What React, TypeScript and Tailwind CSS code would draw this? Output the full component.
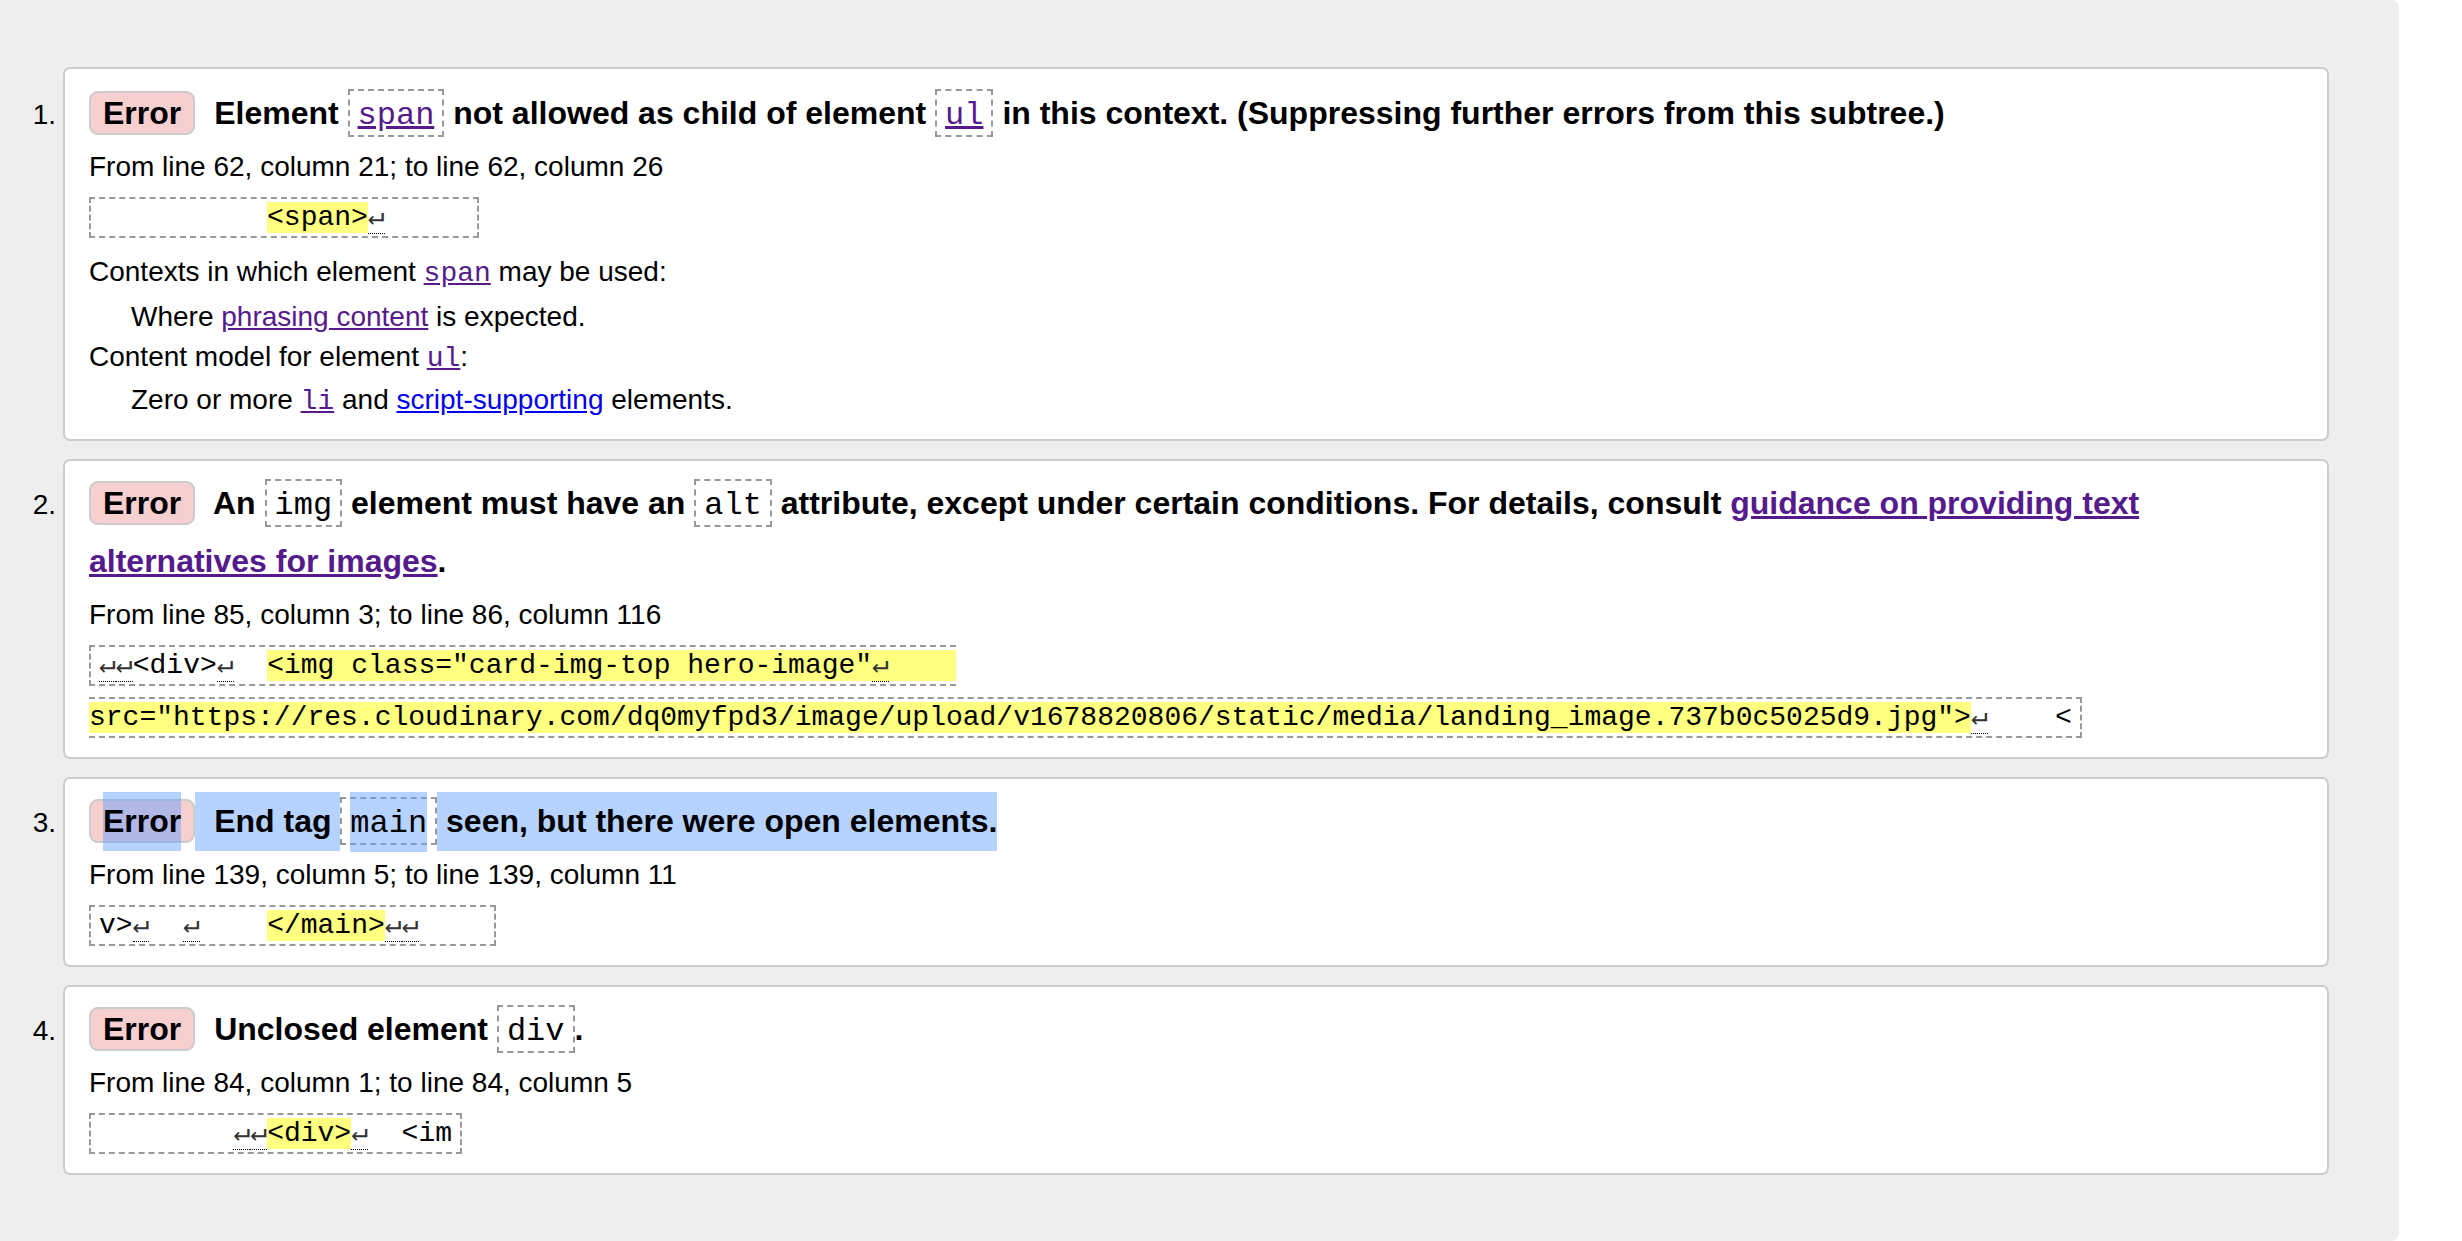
import React from "react";

// selection highlight (semi-transparent blue, tall as the title line)
const SEL = "bg-[#64a0ff78] pt-[11px] pb-[12px]";
const SEL_MONO = "bg-[#64a0ff78] pt-[13px] pb-[10px]";
const MONO = "font-['Liberation_Mono','DejaVu_Sans_Mono',monospace]";
const VISITED = "text-[#551a8b] underline";

function Badge({ selected }: { selected?: boolean }) {
  return (
    <span className="rounded-[9px] border-2 border-[#cccccc] bg-[#f6cfcf] px-[12px] py-[2px]">
      <span className={selected ? SEL : ""}>Error</span>
    </span>
  );
}

// dashed code box inside the bold title
function TCode({ children, link, selected }: { children: React.ReactNode; link?: boolean; selected?: boolean }) {
  return (
    <code
      className={`${MONO} border-2 border-dashed border-[#999999] px-[8px] pt-[6px] pb-[1px] text-[32px] font-normal leading-none`}
    >
      {link ? <a className={VISITED}>{children}</a> : selected ? <span className={SEL_MONO}>{children}</span> : children}
    </code>
  );
}

// inline code link in the body text
function CLink({ children }: { children: React.ReactNode }) {
  return <code className={`${MONO} text-[28px] leading-none ${VISITED}`}>{children}</code>;
}

function Lf() {
  return <span className="border-b border-dotted border-black text-[#333333]">↵</span>;
}

function Hl({ children }: { children: React.ReactNode }) {
  return <span className="bg-[#ffff80]">{children}</span>;
}

function Extract({ children }: { children: React.ReactNode }) {
  return (
    <p className={`${MONO} mt-[5px] text-[28px] leading-[52px]`}>
      <code className="whitespace-pre border-2 border-dashed border-[#999999] px-[8px] py-[3px]">{children}</code>
    </p>
  );
}

function Item({
  n,
  title,
  location,
  extract,
  children,
  first,
}: {
  n: number;
  title: React.ReactNode;
  location: string;
  extract: React.ReactNode;
  children?: React.ReactNode;
  first?: boolean;
}) {
  return (
    <li className="flex items-baseline">
      <div className="w-[56px] shrink-0 text-right text-[28px] leading-[40px]">{n}.</div>
      <div
        className={`ml-[7px] w-[2266px] rounded-[7px] border-2 border-[#cccccc] bg-white px-[24px] pb-[13px] ${first ? "pt-[15px]" : "pt-[13px]"}`}
      >
        <p className="text-[32px] font-bold leading-[58px]">{title}</p>
        <p className="mt-[5px] text-[28px] leading-[40px]">{location}</p>
        <Extract>{extract}</Extract>
        {children}
      </div>
    </li>
  );
}

export default function App() {
  return (
    <div className="min-h-screen bg-white font-['Liberation_Sans',Arial,sans-serif] text-black">
      <div className="h-[1241px] w-[2399px] rounded-r-[8px] bg-[#eeeeee] pt-[67px]">
        <ol className="flex flex-col gap-[18px]">
          <Item
            n={1}
            first
            title={
              <>
                <Badge />
                <span className="pl-[10px]"> Element </span>
                <TCode link>span</TCode>
                {" not allowed as child of element "}
                <TCode link>ul</TCode>
                {" in this context. (Suppressing further errors from this subtree.)"}
              </>
            }
            location="From line 62, column 21; to line 62, column 26"
            extract={
              <>
                {"          "}
                <Hl>{"<span>"}</Hl>
                <Lf />
                {"     "}
              </>
            }
          >
            <dl className="text-[28px]">
              <dt className="mt-[8px] leading-[40px]">
                Contexts in which element <CLink>span</CLink> may be used:
              </dt>
              <dd className="mt-[5px] ml-[42px] leading-[40px]">
                Where <a className={VISITED}>phrasing content</a> is expected.
              </dd>
              <dt className="leading-[40px]">
                Content model for element <CLink>ul</CLink>:
              </dt>
              <dd className="mt-[3px] mb-[6px] ml-[42px] leading-[40px]">
                Zero or more <CLink>li</CLink> and <a className="text-[#0000ee] underline">script-supporting</a> elements.
              </dd>
            </dl>
          </Item>

          <Item
            n={2}
            title={
              <>
                <Badge />
                <span className="pl-[10px]"> An </span>
                <TCode>img</TCode>
                {" element must have an "}
                <TCode>alt</TCode>
                {" attribute, except under certain conditions. For details, consult "}
                <a className={VISITED}>
                  guidance on providing text
                  <br />
                  alternatives for images
                </a>
                .
              </>
            }
            location="From line 85, column 3; to line 86, column 116"
            extract={
              <>
                <Lf />
                <Lf />
                {"<div>"}
                <Lf />
                {"  "}
                <Hl>
                  {'<img class="card-img-top hero-image"'}
                  <Lf />
                  {"    "}
                  <br />
                  {'src="https://res.cloudinary.com/dq0myfpd3/image/upload/v1678820806/static/media/landing_image.737b0c5025d9.jpg">'}
                </Hl>
                <Lf />
                {"    <"}
              </>
            }
          />

          <Item
            n={3}
            title={
              <>
                <Badge selected />
                <span className={`pl-[10px] ${SEL}`}> End tag </span>
                <TCode selected>main</TCode>
                <span className={SEL}> seen, but there were open elements.</span>
              </>
            }
            location="From line 139, column 5; to line 139, column 11"
            extract={
              <>
                {"v>"}
                <Lf />
                {"  "}
                <Lf />
                {"    "}
                <Hl>{"</main>"}</Hl>
                <Lf />
                <Lf />
                {"    "}
              </>
            }
          />

          <Item
            n={4}
            title={
              <>
                <Badge />
                <span className="pl-[10px]"> Unclosed element </span>
                <TCode>div</TCode>.
              </>
            }
            location="From line 84, column 1; to line 84, column 5"
            extract={
              <>
                {"        "}
                <Lf />
                <Lf />
                <Hl>{"<div>"}</Hl>
                <Lf />
                {"  <im"}
              </>
            }
          />
        </ol>
      </div>
    </div>
  );
}
